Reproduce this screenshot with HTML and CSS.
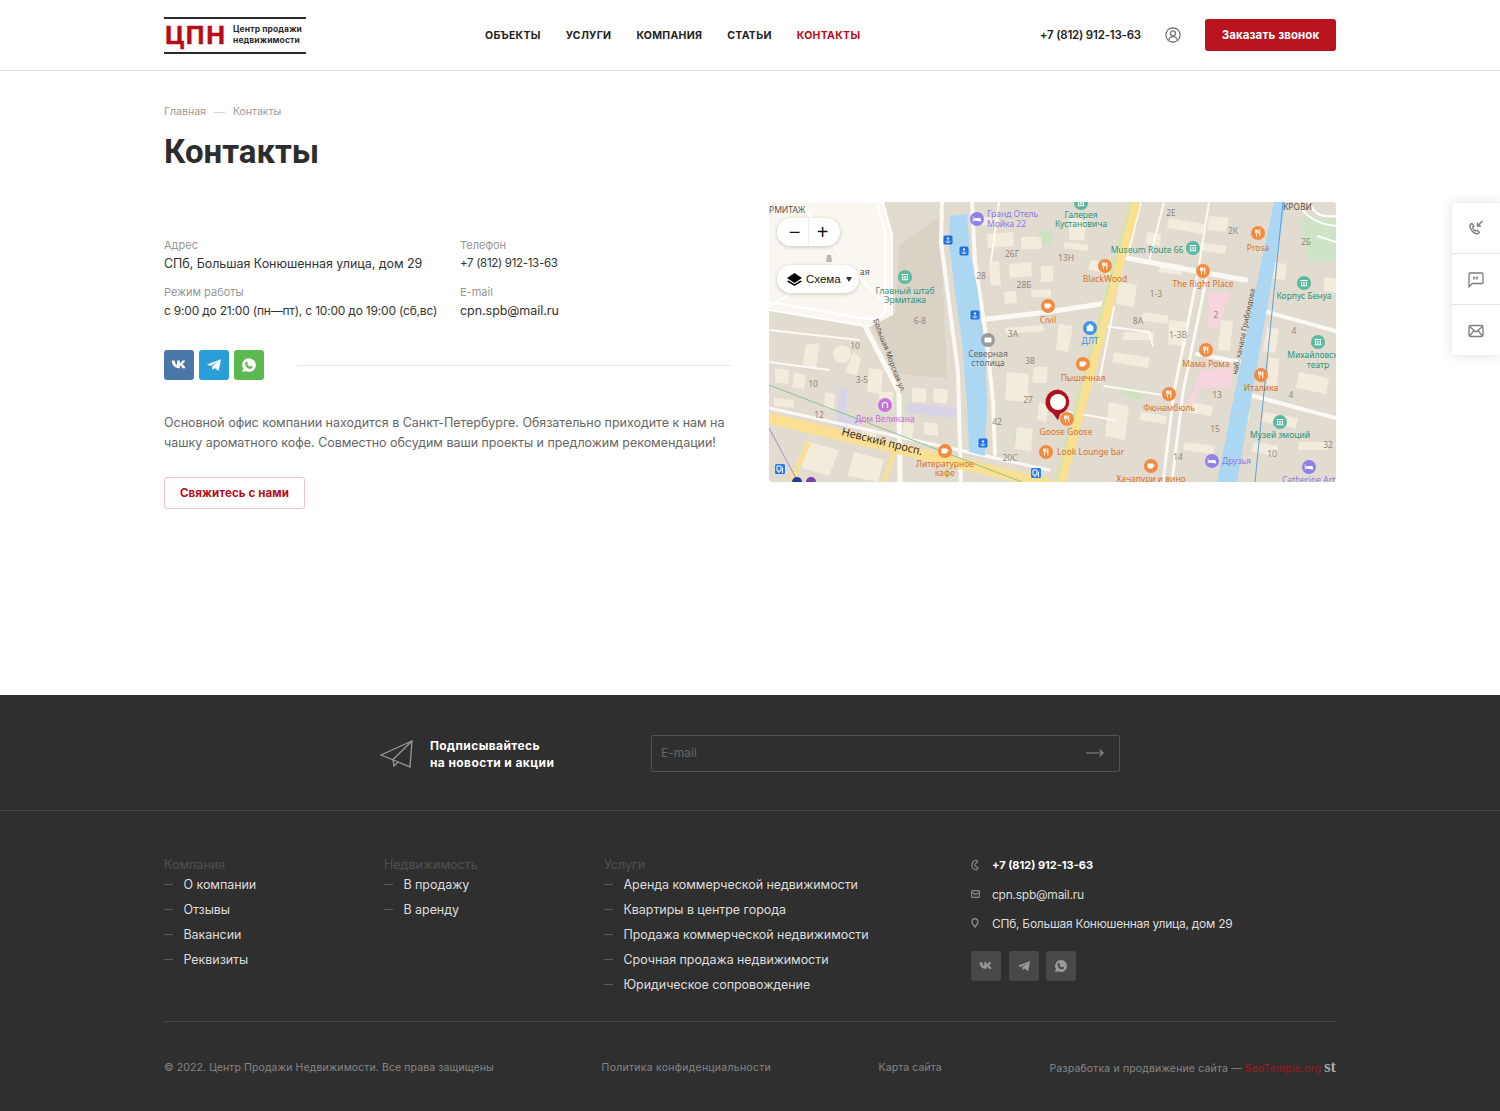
FILE: index.html
```html
<!DOCTYPE html>
<html lang="ru">
<head>
    <meta charset="UTF-8">
    <meta name="viewport" content="width=device-width, initial-scale=1.0">
    <title>Контакты</title>
    <link rel="stylesheet" href="styles.css">
</head>
<body>
    <!-- shared icons -->
    <svg class="sprite" width="0" height="0">
        <symbol id="i-vk" viewBox="0 0 16 16"><path d="M.8 3.6h2.9c.1 2.9 1.4 4.2 2.4 4.4V3.6h2.7v2.6c1-.1 2.1-1.3 2.5-2.6h2.7c-.4 1.8-1.7 3.1-2.7 3.7 1 .5 2.5 1.7 3.1 3.9h-3C11 9.7 10 8.7 8.8 8.5v2.7h-.4C3.7 11.2 1 8.3.8 3.6z"/></symbol>
        <symbol id="i-tg" viewBox="0 0 16 16"><path d="M1 7.6 15 2.2l-2.3 11.7-4.1-3-2.1 2-.4-3.5L12.2 4.3 4.5 9z"/></symbol>
        <symbol id="i-wa" viewBox="0 0 16 16"><path fill-rule="evenodd" d="M8 1.2a6.8 6.8 0 0 0-5.8 10.3L1.2 15l3.6-1A6.8 6.8 0 1 0 8 1.2zM5.6 4.6c.3 0 .5 0 .6.3l.6 1.4c0 .2 0 .4-.1.5l-.5.6c.5 1 1.4 1.8 2.5 2.3l.6-.7c.2-.2.4-.2.6-.1l1.3.6c.2.1.3.3.3.5 0 1-.9 1.8-2 1.7C7.2 12.4 4.4 9.9 4.2 7c-.1-1 .5-2.4 1.4-2.4z"/></symbol>
    </svg>

    <header class="header">
        <div class="wrap header-row">
            <a class="logo" href="#">
                <span class="logo-mark">ЦПН</span>
                <span class="logo-text">Центр продажи<br>недвижимости</span>
            </a>
            <nav class="nav">
                <a href="#">Объекты</a>
                <a href="#">Услуги</a>
                <a href="#">Компания</a>
                <a href="#">Статьи</a>
                <a href="#" class="active">Контакты</a>
            </nav>
            <div class="header-right">
                <a class="header-phone" href="#">+7 (812) 912-13-63</a>
                <svg class="user-icon" width="16" height="16" viewBox="0 0 16 16" fill="none" stroke="#777" stroke-width="1.3">
                    <rect x="1" y="1" width="14" height="14" rx="6.5"/>
                    <circle cx="8" cy="6.3" r="2.5"/>
                    <path d="M3.8 13c.4-2.2 2-3.3 4.2-3.3s3.8 1.1 4.2 3.3"/>
                </svg>
                <a class="call-button" href="#">Заказать звонок</a>
            </div>
        </div>
    </header>

    <aside class="side-panel">
        <a href="#">
            <svg width="18" height="18" viewBox="0 0 18 18" fill="none" stroke="#7c7c7c" stroke-width="1.4">
                <path d="M5 4.5c-2 .6-2.6 2.3-1.700 4.500 1 2.500 3 4.700 5.500 5.500 1.700.5 3 .1 3.500-1.300l-2.500-2-1.500.8C7 11.300 6 10 5.600 8.300l1.300-1.100L5 4.500z"/>
                <path d="M15.500 2 10.500 7M10.500 3.500V7H14"/>
            </svg>
        </a>
        <a href="#">
            <svg width="18" height="18" viewBox="0 0 18 18" fill="none" stroke="#7c7c7c" stroke-width="1.3">
                <path d="M2.500 3h12.500a1 1 0 0 1 1 1v8.500a1 1 0 0 1-1 1H5.500L2 16.500V3.500a1 1 0 0 1 .5-.5z"/>
                <path d="M7.500 6.500 6.500 9.500M10.500 6.500l-1 3" stroke-width="1.6"/>
            </svg>
        </a>
        <a href="#">
            <svg width="18" height="18" viewBox="0 0 18 18" fill="none" stroke="#7c7c7c" stroke-width="1.3">
                <rect x="2" y="3.500" width="14" height="11" rx="1.500"/>
                <path d="M2.500 4.500 9 10l6.500-5.500M2.500 14 7 8.500M15.500 14 11 8.500"/>
            </svg>
        </a>
    </aside>

    <main class="wrap content">
        <div class="breadcrumbs">
            <a href="#">Главная</a>
            <span class="crumb-dash"></span>
            <span>Контакты</span>
        </div>
        <h1>Контакты</h1>

        <div class="contact-grid">
            <div class="contact-info">
                <dl class="details">
                    <div class="detail">
                        <dt>Адрес</dt>
                        <dd>СПб, Большая Конюшенная улица, дом 29</dd>
                    </div>
                    <div class="detail">
                        <dt>Телефон</dt>
                        <dd class="digits">+7 (812) 912-13-63</dd>
                    </div>
                    <div class="detail">
                        <dt>Режим работы</dt>
                        <dd class="hours">с 9:00 до 21:00 (пн—пт), с 10:00 до 19:00 (сб,вс)</dd>
                    </div>
                    <div class="detail">
                        <dt>E-mail</dt>
                        <dd>cpn.spb@mail.ru</dd>
                    </div>
                </dl>

                <div class="social-row">
                    <div class="socials">
                        <a class="soc soc-vk" href="#"><svg width="16" height="16"><use href="#i-vk"/></svg></a>
                        <a class="soc soc-tg" href="#"><svg width="16" height="16"><use href="#i-tg"/></svg></a>
                        <a class="soc soc-wa" href="#"><svg width="16" height="16"><use href="#i-wa"/></svg></a>
                    </div>
                    <div class="social-line"></div>
                </div>

                <p class="about">Основной офис компании находится в Санкт-Петербурге. Обязательно приходите к нам на чашку ароматного кофе. Совместно обсудим ваши проекты и предложим рекомендации!</p>
                <a class="outline-button" href="#">Свяжитесь с нами</a>
            </div>

            <div class="map">
                <svg class="map-canvas" width="567" height="280" viewBox="0 0 567 280">
                    <defs>
                        <g id="p-food"><circle r="7" fill="#f28b3d"/><path d="M-2.500-3.500v3c0 .8.500 1.200 1 1.300V3.500M-1.500-3.500V-.5M-.5-3.500v3c0 .8-.5 1.200-1 1.300M1.800-3.500c-.8.800-1 2-1 3.500h1M1.800-3.500v7" fill="none" stroke="#fff" stroke-width=".9"/></g>
                        <g id="p-cafe"><circle r="7" fill="#f28b3d"/><path d="M-3.500-2.500h5.500V1c0 1-.8 1.500-1.500 1.500h-2.500c-.8 0-1.500-.5-1.500-1.500zM2-1.500h1.500V.5H2" fill="#fff"/></g>
                        <g id="p-mus"><circle r="7" fill="#5ab9a0"/><path d="M-3.500-3h7v1h-7zM-3-1.200h1.200v3H-3zM-.6-1.200H.6v3H-.6zM1.800-1.200H3v3H1.800zM-3.500 2.200h7v1h-7z" fill="#fff"/></g>
                        <g id="p-hotel"><circle r="7" fill="#8f80ea"/><path d="M-3.800-2.500v5M-3.800 1h7.500v1.500M-2.500-.5h5.800V1h-5.800z" fill="#fff" stroke="#fff" stroke-width=".8"/></g>
                        <g id="p-anc"><rect x="-4.500" y="-4.500" width="9" height="9" rx="1.500" fill="#1f6fe0"/><path d="M0-3v5.500M-1.300-1.700H1.300M-2.500.8c.3 1.200 1.300 1.700 2.500 1.700S2.200 2 2.500.8" fill="none" stroke="#fff" stroke-width=".8"/></g>
                        <g id="p-metro"><rect x="-5" y="-5" width="10" height="10" rx="1.500" fill="#2a7be4"/><path d="M-3-3H1V2H-3zM-1 2V4M2.500-1.500V4" fill="none" stroke="#fff" stroke-width="1"/></g>
                    </defs>

                    <!-- ground and city blocks -->
                    <rect width="567" height="280" fill="#e2dbcf"/>
                    <path d="M0 0H114L123 33V113C123 120 108 124 96 124L0 108z" fill="#f9f7f0"/>
                    <path d="M0 0H114L123 33V113C123 120 108 124 96 124L0 108M0 100 92 116C105 118 116 114 116 106V30L108 0M30 0 70 50M70 60 0 105M75 60 115 100" fill="none" stroke="#fff" stroke-width="2"/>
                    <path d="M130 43 171 14 178 176 130 172 102 124 126 112z" fill="#dbd2c6"/>
                    <path d="M531 16 567 16 567 60 539 60z" fill="#cfe4c6"/>
                    <path d="M530 0C532 10 545 22 567 24M540 0C545 12 552 16 567 14M548 34 567 40" fill="none" stroke="#fff" stroke-width="2"/>
                    <path d="M269 29h14v14h-14zM354 184l19 4-1 9-19-4zM245 232h10v10h-10z" fill="#cfe2c0"/>

                    <!-- yards -->
                    <g fill="#f3ecdd">
                        <circle cx="73" cy="152" r="9"/>
                        <path d="M37 143l14-2-4 24-14 1zM84 150l8 6-4 18-12-4zM6 166l14 2-1 14-13-2zM25 170l12 3-2 14-12-2zM100 166l14 2-2 24-14-2zM110 190h14v14h-14zM143 186l14 1v14l-14-1zM165 186l14 2-1 14-14-2zM56 190l10 2-1 16-10-2zM5 196l20 2v8l-20-2zM94 225l14 2-2 16-14-2zM135 220l10 2-2 14-10-2zM155 220l14 2v12l-14-2zM40 240l30 8-10 26-28-8zM85 250l30 8-6 22-30-6z"/>
                        <path d="M210 15h20v8h-20zM218 32l26-2 1 14-26 2zM252 35h20l1 12h-21zM220 60l10-1 2 24-10 1zM240 62l22-2 1 14-22 2zM272 64h12v16h-12zM235 90l12-1 1 12-12 1zM262 88l20-1v8h-20z"/>
                        <path d="M300 16h18l-3 22h-15zM296 40l24 3-2 6-24-3zM322 58l22 4-3 10-22-4zM350 80l18 3-3 22-18-3zM374 110l26 4-2 8-26-4zM392 60l22 3-2 10-22-3zM400 16l36 6-2 10-36-6zM440 14l20 2-3 14-19-2zM378 30l14 2-1 12-14-2zM430 40l28 4-2 8-28-4z"/>
                        <path d="M290 122l14 2-5 26-12-2zM236 126l38-3 1 6-38 3zM238 170l22 2-2 28-22-2zM265 165h14l-2 16h-14zM248 225l16 2-2 22-16-2zM270 200l10 2-3 18-9-2z"/>
                        <path d="M345 150l36 6-2 10-36-6zM355 130h30l-1 8h-30zM340 200l20 4-4 34-20-4zM372 210l26 4-2 8-26-4zM420 200l24 4-2 10-24-4zM416 240l30 4-2 8-30-4zM400 118l18 2-1 24-18-2zM467 200l14 3-1 16-14-3zM498 125l12 2-4 24-12-2zM530 170l30 6-3 16-30-6zM555 75l12 2v14l-12-2zM500 60l18 2-2 16-18-2zM495 210l34 6-2 10-34-6zM485 240l24 4-2 10-24-4zM530 240h30l-1 8h-30zM500 155l10 2-2 28-10-2zM452 118l12 1-3 30-12-1z"/>
                    </g>
                    <path d="M440 90h21l-11 35h-11zM418 206l13-37 33-3-3 20h-30l-8 20z" fill="#f6d5de"/>
                    <path d="M70 186h8v28h12v11H68zM138 201l50 5v10l-50-5z" fill="#d8d3e6"/>

                    <!-- streets -->
                    <g fill="none" stroke="#fbf9f3" stroke-linecap="round">
                        <path d="M96 124 130 190 131 280" stroke-width="5"/>
                        <path d="M173 0 172 40 180 100 189 170 192 280M203 0 206 60 218 140 224 200 226 252" stroke-width="4"/>
                        <path d="M209 118 279 110 338 101" stroke-width="5"/>
                        <path d="M358 56 448 73 477 78" stroke-width="5"/>
                        <path d="M428 76 405 190 394 280M437 78 414 190 403 280" stroke-width="3"/>
                        <path d="M498 110 567 129M481 193 567 216M428 152 471 160" stroke-width="4"/>
                        <path d="M0 206 280 268" stroke-width="3"/>
                        <path d="M320 122 380 130 384 144M335 184 400 194M300 210 345 218M372 0 358 56M395 0 380 60M440 0 428 76M345 105 330 180M230 0 222 60M0 128 90 138M0 160 60 168" stroke-width="2"/>
                    </g>

                    <!-- canals, roads -->
                    <path d="M181 14 198 12 201 50 209 90 216 150 218 200 216 254 200 250 198 200 193 140 186 90 180 40z" fill="#abd7f3"/>
                    <path d="M505 0H517L494 129 468 280H448L478 129z" fill="#abd7f3"/>
                    <path d="M366 0 291 280" fill="none" stroke="#fbe08f" stroke-width="11"/>
                    <path d="M362 0 287 280" fill="none" stroke="#cfe3b7" stroke-width="2.5"/>
                    <path d="M0 216 283 283" fill="none" stroke="#fbdf92" stroke-width="11"/>
                    <path d="M40 240 22 280M125 250 115 280" fill="none" stroke="#fbdf92" stroke-width="5"/>
                    <path d="M0 183 253 280" fill="none" stroke="#8bc58b" stroke-width="1"/>
                    <path d="M0 226 29 280" fill="none" stroke="#a78bc9" stroke-width="1"/>
                    <path d="M514 0 486 280" fill="none" stroke="#5d9fd6" stroke-width="1"/>

                    <!-- markers -->
                    <use href="#p-hotel" x="208" y="17"/>
                    <use href="#p-mus" x="312" y="1"/>
                    <use href="#p-mus" x="424" y="46"/>
                    <use href="#p-food" x="489" y="31"/>
                    <use href="#p-mus" x="136" y="75"/>
                    <use href="#p-food" x="336" y="64"/>
                    <use href="#p-food" x="434" y="69"/>
                    <use href="#p-mus" x="535" y="81"/>
                    <use href="#p-cafe" x="279" y="104"/>
                    <circle cx="321" cy="126" r="7" fill="#3f95ec"/>
                    <path d="M318 124h6v5h-6zM319.500 124c0-2.500 3-2.500 3 0" fill="#fff" stroke="#fff" stroke-width=".5"/>
                    <circle cx="219" cy="138" r="7" fill="#9a9a9a"/>
                    <rect x="215.500" y="135.500" width="7" height="5" rx="1" fill="#fff"/>
                    <use href="#p-mus" x="549" y="140"/>
                    <use href="#p-food" x="437" y="148"/>
                    <use href="#p-cafe" x="314" y="162"/>
                    <use href="#p-food" x="492" y="173"/>
                    <use href="#p-food" x="400" y="192"/>
                    <circle cx="116" cy="203" r="7" fill="#c873e0"/>
                    <path d="M113.500 206v-3a2.500 2.500 0 0 1 5 0v3" fill="none" stroke="#fff" stroke-width="1.2"/>
                    <use href="#p-food" x="298" y="217"/>
                    <use href="#p-mus" x="511" y="220"/>
                    <use href="#p-cafe" x="176" y="249"/>
                    <use href="#p-food" x="277" y="250"/>
                    <use href="#p-hotel" x="443" y="259"/>
                    <use href="#p-hotel" x="540" y="265"/>
                    <use href="#p-cafe" x="382" y="264"/>
                    <use href="#p-anc" x="179" y="38"/>
                    <use href="#p-anc" x="195" y="49"/>
                    <use href="#p-anc" x="206" y="113"/>
                    <use href="#p-anc" x="214" y="241"/>
                    <use href="#p-metro" x="267" y="271"/>
                    <use href="#p-metro" x="11" y="267"/>
                    <circle cx="28" cy="280" r="5" fill="#1d3f9e"/>
                    <circle cx="42" cy="280" r="5" fill="#7b3fa8"/>
                    <path d="M58 53h4l1 7h-6z" fill="#bdb7a9"/>

                    <!-- labels -->
                    <g class="ml">
                        <text x="0" y="11" class="ml-d">РМИТАЖ</text>
                        <text x="514" y="8" class="ml-d">КРОВИ</text>
                        <text x="91" y="73" class="ml-d">ая</text>
                        <text x="218" y="15" class="ml-p">Гранд Отель</text>
                        <text x="218" y="25" class="ml-p">Мойка 22</text>
                        <g class="mid">
                            <text x="312" y="16" class="ml-t">Галерея</text>
                            <text x="312" y="25" class="ml-t">Кустановича</text>
                            <text x="378" y="51" class="ml-t">Museum Route 66</text>
                            <text x="136" y="92" class="ml-t">Главный штаб</text>
                            <text x="136" y="101" class="ml-t">Эрмитажа</text>
                            <text x="535" y="97" class="ml-t">Корпус Бенуа</text>
                            <text x="549" y="156" class="ml-t">Михайловский</text>
                            <text x="549" y="166" class="ml-t">театр</text>
                            <text x="511" y="236" class="ml-t">Музей эмоций</text>
                            <text x="489" y="49" class="ml-o">Prosa</text>
                            <text x="336" y="80" class="ml-o">BlackWood</text>
                            <text x="434" y="85" class="ml-o">The Right Place</text>
                            <text x="279" y="121" class="ml-o">Civil</text>
                            <text x="437" y="165" class="ml-o">Мама Рома</text>
                            <text x="314" y="179" class="ml-o">Пышечная</text>
                            <text x="492" y="189" class="ml-o">Италика</text>
                            <text x="400" y="209" class="ml-o">Фюнамбюль</text>
                            <text x="297" y="233" class="ml-o">Goose Goose</text>
                            <text x="176" y="265" class="ml-o">Литературное</text>
                            <text x="176" y="274" class="ml-o">кафе</text>
                            <text x="382" y="280" class="ml-o">Хачапури и вино</text>
                            <text x="321" y="142" class="ml-b">ДЛТ</text>
                            <text x="219" y="155" class="ml-g">Северная</text>
                            <text x="219" y="164" class="ml-g">столица</text>
                            <text x="116" y="220" class="ml-v">Дом Великана</text>
                            <text x="402" y="14" class="ml-n">2Е</text>
                            <text x="243" y="55" class="ml-n">26Г</text>
                            <text x="212" y="77" class="ml-n">28</text>
                            <text x="255" y="86" class="ml-n">28Б</text>
                            <text x="297" y="59" class="ml-n">13Н</text>
                            <text x="464" y="32" class="ml-n">2К</text>
                            <text x="537" y="43" class="ml-n">2Б</text>
                            <text x="387" y="95" class="ml-n">1-3</text>
                            <text x="447" y="116" class="ml-n">2</text>
                            <text x="369" y="122" class="ml-n">8А</text>
                            <text x="409" y="136" class="ml-n">1-3В</text>
                            <text x="525" y="132" class="ml-n">4</text>
                            <text x="448" y="196" class="ml-n">13</text>
                            <text x="522" y="196" class="ml-n">4</text>
                            <text x="446" y="230" class="ml-n">15</text>
                            <text x="559" y="246" class="ml-n">32</text>
                            <text x="503" y="255" class="ml-n">10</text>
                            <text x="409" y="258" class="ml-n">14</text>
                            <text x="151" y="122" class="ml-n">6-8</text>
                            <text x="244" y="135" class="ml-n">3А</text>
                            <text x="261" y="162" class="ml-n">38</text>
                            <text x="86" y="147" class="ml-n">10</text>
                            <text x="44" y="185" class="ml-n">10</text>
                            <text x="93" y="181" class="ml-n">3-5</text>
                            <text x="50" y="216" class="ml-n">12</text>
                            <text x="259" y="201" class="ml-n">27</text>
                            <text x="228" y="223" class="ml-n">42</text>
                            <text x="241" y="259" class="ml-n">20С</text>
                        </g>
                        <text x="288" y="253" class="ml-o">Look Lounge bar</text>
                        <text x="453" y="262" class="ml-p">Друзья</text>
                        <text x="513" y="281" class="ml-p">Catherine Art</text>
                        <text class="ml-road" x="72" y="233" transform="rotate(14 72 233)">Невский просп.</text>
                        <text class="ml-st" x="104" y="118" transform="rotate(69 104 118)">Большая Морская ул.</text>
                        <text class="ml-st" x="468" y="173" transform="rotate(-78 468 173)">наб. канала Грибоедова</text>
                    </g>

                    <!-- office pin -->
                    <path d="M289 187.500a12.500 12.500 0 0 0-5 24l5 7 2-6.500a12.500 12.500 0 0 0-2-24.500z" fill="#b0101c"/>
                    <circle cx="289" cy="200" r="8" fill="#fff"/>
                </svg>

                <div class="map-zoom">
                    <span class="zoom-btn">−</span>
                    <span class="zoom-btn">+</span>
                </div>
                <div class="map-layers">
                    <svg width="15" height="13" viewBox="0 0 15 13"><path d="M7.500 0 15 5l-7.500 5L0 5z"/><path d="M1.500 7.500 0 8.500 7.500 13 15 8.500l-1.500-1-6 3.800z"/></svg>
                    <span>Схема</span>
                    <i class="caret"></i>
                </div>
            </div>
        </div>
    </main>

    <footer class="footer">
        <section class="subscribe">
            <div class="subscribe-row">
                <svg class="plane" width="33" height="28" viewBox="0 0 33 28" fill="none" stroke="#999" stroke-width="1.3">
                    <path d="M1 15 32 1 30 27 16 21z"/>
                    <path d="M32 1 13 19.500 14 26 18 22"/>
                </svg>
                <div class="subscribe-text">Подписывайтесь<br>на новости и акции</div>
                <form class="subscribe-form">
                    <input type="text" placeholder="E-mail">
                    <svg width="18" height="8" viewBox="0 0 18 8" fill="none" stroke="#8c8c8c" stroke-width="1.2"><path d="M0 4h17M13.500.8 17 4l-3.500 3.200"/></svg>
                </form>
            </div>
        </section>

        <div class="wrap footer-main">
            <div class="footer-col col-company">
                <h4>Компания</h4>
                <ul>
                    <li><a href="#">О компании</a></li>
                    <li><a href="#">Отзывы</a></li>
                    <li><a href="#">Вакансии</a></li>
                    <li><a href="#">Реквизиты</a></li>
                </ul>
            </div>
            <div class="footer-col col-realty">
                <h4>Недвижимость</h4>
                <ul>
                    <li><a href="#">В продажу</a></li>
                    <li><a href="#">В аренду</a></li>
                </ul>
            </div>
            <div class="footer-col col-services">
                <h4>Услуги</h4>
                <ul>
                    <li><a href="#">Аренда коммерческой недвижимости</a></li>
                    <li><a href="#">Квартиры в центре города</a></li>
                    <li><a href="#">Продажа коммерческой недвижимости</a></li>
                    <li><a href="#">Срочная продажа недвижимости</a></li>
                    <li><a href="#">Юридическое сопровождение</a></li>
                </ul>
            </div>
            <div class="footer-contacts">
                <div class="fc-line fc-phone">
                    <svg width="8" height="12" viewBox="0 0 8 12" fill="none" stroke="#8c8c8c" stroke-width="1.2"><path d="M5.500 1C2.500 1 1 3.500 1 6s1.500 5 4.500 5l1.500-2-2-1.500C3.500 7 3.500 5 4.500 4.500L6.500 3z"/></svg>
                    <span>+7 (812) 912-13-63</span>
                </div>
                <div class="fc-line">
                    <svg width="9" height="8" viewBox="0 0 9 8" fill="none" stroke="#8c8c8c" stroke-width="1.1"><rect x=".6" y=".6" width="7.800" height="6.800" rx="1"/><path d="M1 2.500 4.500 4.500 8 2.500"/></svg>
                    <span>cpn.spb@mail.ru</span>
                </div>
                <div class="fc-line">
                    <svg width="8" height="10" viewBox="0 0 8 10" fill="none" stroke="#8c8c8c" stroke-width="1.4"><path d="M4 9C2.500 7 1 5.500 1 3.800a3 3 0 0 1 6 0C7 5.500 5.500 7 4 9z"/></svg>
                    <span>СПб, Большая Конюшенная улица, дом 29</span>
                </div>
                <div class="footer-socials">
                    <a href="#"><svg width="14" height="14"><use href="#i-vk"/></svg></a>
                    <a href="#"><svg width="14" height="14"><use href="#i-tg"/></svg></a>
                    <a href="#"><svg width="14" height="14"><use href="#i-wa"/></svg></a>
                </div>
            </div>
        </div>

        <div class="wrap footer-bottom">
            <span>© 2022. Центр Продажи Недвижимости. Все права защищены</span>
            <a class="policy" href="#">Политика конфиденциальности</a>
            <a href="#">Карта сайта</a>
            <span class="dev">Разработка и продвижение сайта — <a href="#">SeoTemple.org</a> <b class="dev-mark">st</b></span>
        </div>
    </footer>
</body>
</html>
```

FILE: styles.css
```css
* {
    box-sizing: border-box;
}
body {
    margin: 0;
    font-family: Inter, "Noto Sans", sans-serif;
    font-size: 12.5px;
    color: #2d2d2d;
    background: #fff;
}
a {
    color: inherit;
    text-decoration: none;
}
.sprite {
    display: block;
    height: 0;
}
.wrap {
    width: 1172px;
    margin: 0 auto;
}

/* header */
.header {
    height: 71px;
    border-bottom: 1px solid #e4e4e4;
}
.header-row {
    display: flex;
    align-items: center;
    height: 70px;
}
.logo {
    display: flex;
    align-items: center;
    width: 142px;
    height: 37px;
    border-top: 2.5px solid #2a2a2a;
    border-bottom: 2.5px solid #2a2a2a;
    margin-right: 179px;
}
.logo-mark {
    width: 68px;
    margin-left: 1px;
    font-family: "Liberation Sans", sans-serif;
    font-size: 26px;
    font-weight: 700;
    line-height: 1;
    color: #b70d17;
    letter-spacing: 1.8px;
    -webkit-text-stroke: 0.5px #b70d17;
}
.logo-text {
    font-size: 8.5px;
    font-weight: 700;
    line-height: 11px;
    color: #2a2a2a;
    letter-spacing: 0.1px;
    white-space: nowrap;
}
.nav {
    display: flex;
    gap: 25px;
}
.nav a {
    font-size: 10.5px;
    font-weight: 700;
    text-transform: uppercase;
    letter-spacing: 0.3px;
    color: #222;
}
.nav a.active {
    color: #b70d17;
}
.header-right {
    display: flex;
    align-items: center;
    margin-left: auto;
}
.header-phone {
    font-size: 11.5px;
    font-weight: 600;
    letter-spacing: -0.2px;
    color: #222;
}
.user-icon {
    margin: 0 24px;
}
.call-button {
    display: block;
    width: 131px;
    height: 32px;
    line-height: 32px;
    text-align: center;
    background: #b7141e;
    border-radius: 3px;
    color: #fff;
    font-size: 11.5px;
    font-weight: 700;
    letter-spacing: 0.1px;
}

/* side panel */
.side-panel {
    position: fixed;
    top: 203px;
    right: 0;
    width: 48px;
    height: 152px;
    background: #fff;
    box-shadow: 0 0 12px rgba(0, 0, 0, 0.14);
    border-radius: 3px 0 0 3px;
}
.side-panel a {
    display: flex;
    align-items: center;
    justify-content: center;
    height: 51px;
    border-bottom: 1px solid #e4e4e4;
}
.side-panel a:last-child {
    border-bottom: none;
}

/* page content */
.content {
    height: 624px;
    padding-top: 34px;
}
.breadcrumbs {
    display: flex;
    align-items: center;
    font-size: 10.5px;
    color: #9a9a9a;
    line-height: 14px;
}
.crumb-dash {
    width: 11px;
    height: 1px;
    margin: 0 8px;
    background: #d5d5d5;
}
h1 {
    margin: 13px 0 0;
    font-family: Roboto, sans-serif;
    font-size: 33px;
    font-weight: 700;
    line-height: 40px;
    color: #2d2d2d;
}
.contact-grid {
    display: grid;
    grid-template-columns: 567px 567px;
    gap: 38px;
    margin-top: 30px;
}
.contact-info {
    padding-top: 36px;
}
.details {
    display: grid;
    grid-template-columns: 296px 1fr;
    row-gap: 13px;
    margin: 0;
}
.detail dt {
    font-size: 11px;
    line-height: 14px;
    color: #979797;
}
.detail dd {
    margin: 3px 0 0;
    font-size: 12.5px;
    line-height: 17px;
    letter-spacing: -0.05px;
    color: #333;
    white-space: nowrap;
}
.detail dd.digits {
    font-size: 11.5px;
    letter-spacing: -0.3px;
}
.detail dd.hours {
    font-size: 12px;
    letter-spacing: -0.2px;
}
.social-row {
    display: flex;
    align-items: center;
    margin-top: 31px;
}
.socials {
    display: flex;
    gap: 5px;
}
.soc {
    display: flex;
    align-items: center;
    justify-content: center;
    width: 30px;
    height: 30px;
    border-radius: 3px;
    fill: #fff;
}
.soc-vk {
    background: #4a76a8;
}
.soc-tg {
    background: #2a9ed8;
}
.soc-wa {
    background: #5cb951;
}
.social-line {
    flex: 1;
    height: 1px;
    margin-left: 34px;
    background: #e4e4e4;
}
.about {
    margin: 33px 0 0;
    font-size: 12.5px;
    line-height: 20px;
    letter-spacing: -0.03px;
    color: #666;
}
.outline-button {
    display: block;
    width: 141px;
    height: 32px;
    margin-top: 24px;
    line-height: 30px;
    text-align: center;
    border: 1px solid #eec4c6;
    border-radius: 3px;
    color: #b70d17;
    font-size: 11.5px;
    font-weight: 700;
    letter-spacing: 0.1px;
}

/* map */
.map {
    position: relative;
    height: 280px;
    overflow: hidden;
    border-radius: 3px;
}
.map-canvas {
    display: block;
}
.ml {
    font-family: "Noto Sans", sans-serif;
    font-size: 8.5px;
}
.mid {
    text-anchor: middle;
}
.ml-d, .ml-st {
    fill: #55524c;
}
.ml-st {
    font-size: 7.5px;
}
.ml-road {
    font-size: 11px;
    fill: #333;
}
.ml-p {
    fill: #8a7ae8;
}
.ml-t {
    fill: #2b9580;
}
.ml-o {
    fill: #d9722a;
}
.ml-b {
    fill: #3a8de6;
}
.ml-g {
    fill: #6e6c68;
}
.ml-v {
    fill: #c26fdc;
}
.ml-n {
    fill: #8f897e;
}
.map-zoom, .map-layers {
    position: absolute;
    left: 8px;
    display: flex;
    align-items: center;
    height: 28px;
    background: #fff;
    border-radius: 14px;
    box-shadow: 0 1px 4px rgba(0, 0, 0, 0.2);
    font-family: "Liberation Sans", sans-serif;
    color: #111;
}
.map-zoom {
    top: 16px;
    width: 63px;
    padding: 0 4px;
}
.zoom-btn {
    flex: 1;
    text-align: center;
    font-size: 20px;
    line-height: 28px;
}
.zoom-btn:first-child {
    border-right: 1px solid #eee;
}
.map-layers {
    top: 63px;
    width: 82px;
    padding-left: 10px;
    font-size: 11.5px;
}
.map-layers svg {
    margin-right: 4px;
}
.caret {
    margin-left: 5px;
    border-top: 5px solid #333;
    border-left: 3px solid transparent;
    border-right: 3px solid transparent;
}

/* footer */
.footer {
    height: 416px;
    background: #2f2f2f;
    color: #ddd;
}
.subscribe {
    height: 116px;
    border-bottom: 1px solid #454545;
}
.subscribe-row {
    display: flex;
    align-items: flex-start;
    padding: 40px 0 0 380px;
}
.plane {
    margin-top: 5px;
}
.subscribe-text {
    width: 221px;
    margin: 2px 0 0 17px;
    font-size: 12px;
    font-weight: 700;
    line-height: 17px;
    letter-spacing: 0.4px;
    color: #fff;
}
.subscribe-form {
    display: flex;
    align-items: center;
    width: 469px;
    height: 37px;
    padding: 0 15px 2px 9px;
    border: 1px solid #525252;
    border-radius: 2px;
}
.subscribe-form input {
    flex: 1;
    padding: 0;
    border: none;
    outline: none;
    background: none;
    font-family: Inter, sans-serif;
    font-size: 12px;
    color: #ddd;
}
.subscribe-form input::placeholder {
    color: #666;
}
.footer-main {
    display: flex;
    height: 211px;
    padding-top: 46px;
    border-bottom: 1px solid #454545;
}
.footer-col h4 {
    margin: 0;
    font-size: 12.5px;
    font-weight: 400;
    line-height: 15px;
    color: #4f4f4f;
}
.footer-col ul {
    margin: 3px 0 0;
    padding: 0;
    list-style: none;
}
.footer-col li {
    position: relative;
    height: 25px;
    padding-left: 19.5px;
    font-size: 12.5px;
    line-height: 20px;
    letter-spacing: -0.06px;
    color: #ddd;
}
.footer-col li::before {
    content: "";
    position: absolute;
    left: 0;
    top: 9px;
    width: 9px;
    height: 1px;
    background: #5a5a5a;
}
.col-company, .col-realty {
    width: 220px;
}
.col-services {
    width: 367px;
}
.fc-line {
    display: grid;
    grid-template-columns: 21px 1fr;
    align-items: center;
    height: 16px;
    margin-bottom: 13px;
    font-size: 12px;
    letter-spacing: -0.25px;
}
.fc-line span {
    white-space: nowrap;
}
.fc-phone {
    font-weight: 700;
    color: #fff;
    font-size: 11px;
    letter-spacing: 0;
}
.footer-socials {
    display: flex;
    gap: 7.5px;
    margin-top: 20px;
}
.footer-socials a {
    display: flex;
    align-items: center;
    justify-content: center;
    width: 30px;
    height: 30px;
    background: #484848;
    border-radius: 3px;
    fill: #9a9a9a;
}
.footer-bottom {
    display: flex;
    justify-content: space-between;
    align-items: center;
    height: 90px;
    font-size: 10.5px;
    letter-spacing: 0.1px;
    color: #858585;
}
.policy {
    letter-spacing: 0.25px;
}
.dev {
    letter-spacing: 0.15px;
}
.dev a {
    color: #a3161f;
}
.dev-mark {
    font-family: "Liberation Serif", serif;
    font-size: 16px;
    color: #aaa;
}
```
